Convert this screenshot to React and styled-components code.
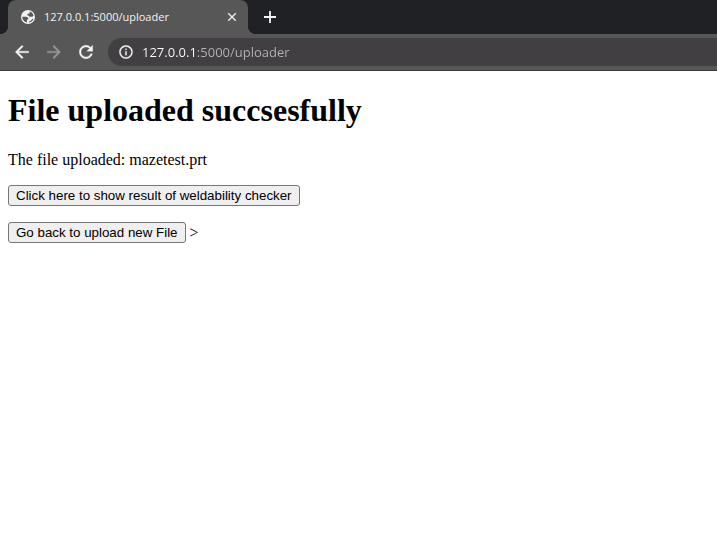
import React, { useState } from "react";
import styled, { createGlobalStyle } from "styled-components";

const GlobalStyle = createGlobalStyle`
  * { box-sizing: border-box; }
  body {
    margin: 0;
    background: #fff;
    color: #000;
    font-family: "Liberation Serif", "Times New Roman", serif;
    font-size: 16px;
  }
`;

const uiFont = `"Open Sans", "Noto Sans", sans-serif`;

const TabStrip = styled.div`
  display: flex;
  align-items: stretch;
  height: 34px;
  padding-left: 8px;
  background: #202124;
`;

const Tab = styled.div`
  position: relative;
  display: flex;
  align-items: center;
  flex: 0 1 240px;
  gap: 8px;
  padding: 0 8px 0 12px;
  border-radius: 8px 8px 0 0;
  background: #575757;
  color: #f1f1f1;

  &::before,
  &::after {
    content: "";
    position: absolute;
    bottom: 0;
    width: 8px;
    height: 8px;
  }
  &::before {
    right: 100%;
    background: radial-gradient(circle at 0 0, transparent 8px, #575757 8px);
  }
  &::after {
    left: 100%;
    background: radial-gradient(circle at 100% 0, transparent 8px, #575757 8px);
  }
`;

const TabTitle = styled.span`
  flex: 1;
  overflow: hidden;
  font: 11px/16px ${uiFont};
  white-space: nowrap;
`;

const IconButton = styled.button`
  display: flex;
  align-items: center;
  justify-content: center;
  width: ${(p) => p.$size}px;
  height: ${(p) => p.$size}px;
  padding: 0;
  border: 0;
  border-radius: 50%;
  background: none;
  color: ${(p) => (p.disabled ? "#969696" : "#f4f4f4")};
`;

const NewTabSlot = styled.div`
  display: flex;
  align-items: center;
  padding-left: 8px;
`;

const Toolbar = styled.div`
  display: flex;
  align-items: center;
  gap: 4px;
  height: 37px;
  padding-left: 8px;
  border-bottom: 1px solid #3d3b3e;
  background: #575757;
`;

const AddressBar = styled.label`
  display: flex;
  align-items: center;
  flex: 1;
  gap: 8px;
  height: 28px;
  margin-left: 4px;
  padding-left: 10px;
  border-radius: 14px 0 0 14px;
  background: #413f42;
  color: #f1f1f1;
`;

const AddressInput = styled.input`
  flex: 1;
  min-width: 0;
  height: 20px;
  padding: 0;
  border: 0;
  outline: 0;
  background: linear-gradient(90deg, #fff 54px, #b4b3b5 54px);
  background-clip: text;
  color: transparent;
  caret-color: #fff;
  font: 13px/20px ${uiFont};
`;

const Icon = styled.svg`
  display: block;
  flex: none;
  fill: currentColor;
`;

const Page = styled.main`
  padding: 21px 8px;
`;

const Title = styled.h1`
  margin: 0 0 22px;
  font-size: 32px;
  line-height: 37px;
`;

const Line = styled.p`
  margin: 0 0 16px;
  line-height: 18px;
`;

const ActionRow = styled.div`
  display: flex;
  align-items: center;
  gap: 4px;
  margin-bottom: 16px;
  line-height: 18px;
`;

const ActionButton = styled.button`
  height: 21px;
  padding: 0 7px;
  border: 1px solid #767676;
  border-radius: 3px;
  background: #efefef;
  color: #000;
  font-family: "Liberation Sans", Arial, sans-serif;
  line-height: 19px;
`;

function Glyph({ size, d, weight = 0 }) {
  return (
    <Icon width={size} height={size} viewBox="0 0 24 24" aria-hidden="true">
      <path d={d} stroke="currentColor" strokeWidth={weight} />
    </Icon>
  );
}

const paths = {
  close:
    "M19 6.410 17.590 5 12 10.590 6.410 5 5 6.410 10.590 12 5 17.590 6.410 19 12 13.410 17.590 19 19 17.590 13.410 12z",
  plus: "M20 13.200h-6.800V20h-2.400v-6.800H4v-2.400h6.800V4h2.400v6.800H20z",
  back: "M20 11H7.830l5.590-5.590L12 4l-8 8 8 8 1.410-1.410L7.830 13H20z",
  forward: "M4 11h12.170l-5.590-5.590L12 4l8 8-8 8-1.410-1.410L16.170 13H4z",
  reload:
    "M17.650 6.350C16.200 4.900 14.210 4 12 4c-4.420 0-7.990 3.580-7.990 8s3.570 8 7.990 8c3.730 0 6.840-2.550 7.730-6h-2.080c-.820 2.330-3.040 4-5.650 4-3.310 0-6-2.690-6-6s2.690-6 6-6c1.660 0 3.140.690 4.220 1.780L13 11h7V4z",
  info: "M11 17h2v-6h-2v6zm1-15C6.480 2 2 6.480 2 12s4.480 10 10 10 10-4.480 10-10S17.520 2 12 2zm0 18c-4.410 0-8-3.590-8-8s3.590-8 8-8 8 3.590 8 8-3.590 8-8 8zM11 9h2V7h-2v2z",
};

export default function App() {
  const [address, setAddress] = useState("127.0.0.1:5000/uploader");
  return (
    <>
      <GlobalStyle />
      <header>
        <TabStrip>
          <Tab>
            <Icon width="16" height="16" viewBox="0 0 16 16" aria-hidden="true">
              <circle cx="8" cy="8" r="7" />
              <path
                d="M2.300 7.700h3.500c1.500 0 2.500.8 2.500 2.200v.6H6.900v2.900C4.200 12.900 2.200 10.700 2.300 7.700ZM9.700 2.500c1.900.6 3.300 2 3.800 3.900-.5.9-1.100 1.300-2 1.300H9.900c-.8 0-1.200-.4-1.200-1.100H7.400V4.700h1.500c.5 0 .8-.3.8-.8ZM9.200 13.500v-1.300c1.500-.2 2.400-1 2.800-2.300l1.500-.1c-.6 1.900-2.200 3.300-4.300 3.700Z"
                fill="#575757"
              />
            </Icon>
            <TabTitle>127.0.0.1:5000/uploader</TabTitle>
            <IconButton type="button" $size={16} aria-label="Close tab">
              <Glyph size={14} d={paths.close} weight={0.5} />
            </IconButton>
          </Tab>
          <NewTabSlot>
            <IconButton type="button" $size={28} aria-label="New tab">
              <Glyph size={18} d={paths.plus} />
            </IconButton>
          </NewTabSlot>
        </TabStrip>
        <Toolbar>
          <IconButton type="button" $size={28} aria-label="Back">
            <Glyph size={20} d={paths.back} weight={0.4} />
          </IconButton>
          <IconButton type="button" $size={28} aria-label="Forward" disabled>
            <Glyph size={20} d={paths.forward} weight={0.4} />
          </IconButton>
          <IconButton type="button" $size={28} aria-label="Reload">
            <Glyph size={20} d={paths.reload} weight={0.4} />
          </IconButton>
          <AddressBar>
            <Glyph size={16} d={paths.info} weight={0.3} />
            <AddressInput
              type="text"
              aria-label="Address"
              spellCheck={false}
              value={address}
              onChange={(e) => setAddress(e.target.value)}
            />
          </AddressBar>
        </Toolbar>
      </header>
      <Page>
        <Title>File uploaded succsesfully</Title>
        <Line>The file uploaded: mazetest.prt</Line>
        <ActionRow>
          <ActionButton type="button">
            Click here to show result of weldability checker
          </ActionButton>
        </ActionRow>
        <ActionRow>
          <ActionButton type="button">Go back to upload new File</ActionButton>
          <span>&gt;</span>
        </ActionRow>
      </Page>
    </>
  );
}
